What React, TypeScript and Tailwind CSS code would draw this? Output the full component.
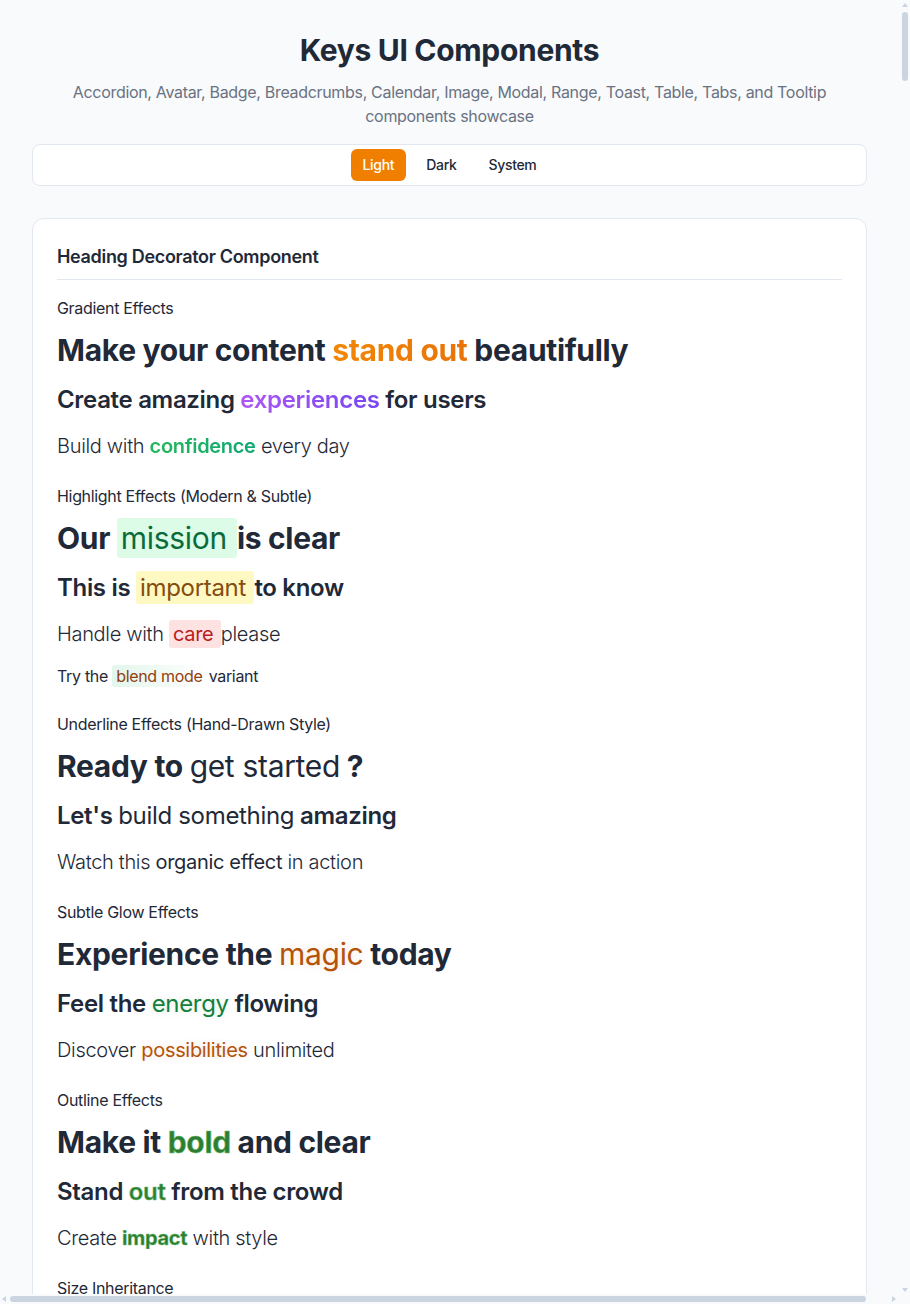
import React from "react";

type Mode = "Light" | "Dark" | "System";

const modes: Mode[] = ["Light", "Dark", "System"];

function SectionLabel({ children, className = "" }: { children: React.ReactNode; className?: string }) {
  return <h4 className={`text-base font-normal text-[#1f2937] ${className}`}>{children}</h4>;
}

function H1({ children }: { children: React.ReactNode }) {
  return <h1 className="mt-3 text-3xl font-bold text-[#1f2937]">{children}</h1>;
}

function H2({ children }: { children: React.ReactNode }) {
  return <h2 className="mt-4 text-2xl font-semibold text-[#1f2937]">{children}</h2>;
}

function P({ children }: { children: React.ReactNode }) {
  return <p className="mt-4 text-xl font-light text-[#1f2937]">{children}</p>;
}

function Arrow({ dir }: { dir: "up" | "down" | "left" | "right" }) {
  const points = {
    up: "0,4 3,0 6,4",
    down: "0,0 6,0 3,4",
    left: "4,0 4,6 0,3",
    right: "0,0 0,6 4,3",
  }[dir];
  const vertical = dir === "up" || dir === "down";
  return (
    <svg width={vertical ? 6 : 4} height={vertical ? 4 : 6} viewBox={vertical ? "0 0 6 4" : "0 0 4 6"}>
      <polygon points={points} fill="#cbd5e1" />
    </svg>
  );
}

export default function App() {
  const mode: Mode = "Light";

  return (
    <div className="flex h-screen flex-col bg-[#f8fafc] font-[Inter,sans-serif] tracking-[-0.02em]">
      <div className="flex min-h-0 flex-1">
        <main className="min-w-0 flex-1 overflow-auto px-8 pt-8 pb-16 [scrollbar-width:none]">
          <header className="text-center">
            <h1 className="text-3xl font-bold text-[#1f2937]">Keys UI Components</h1>
            <p className="mx-auto mt-3 max-w-3xl text-base text-gray-500">
              Accordion, Avatar, Badge, Breadcrumbs, Calendar, Image, Modal, Range, Toast, Table, Tabs, and Tooltip
              components showcase
            </p>
          </header>

          <div className="mt-4 flex justify-center gap-2 rounded-lg border border-slate-200 bg-white p-1">
            {modes.map((m) => (
              <button
                key={m}
                className={
                  m === mode
                    ? "h-8 rounded-md bg-[#f07f00] px-3 text-sm font-medium text-white"
                    : "h-8 rounded-md px-3 text-sm font-medium text-[#1f2937]"
                }
                type="button"
              >
                {m}
              </button>
            ))}
          </div>

          <section className="mt-8 rounded-xl border border-slate-200 bg-white p-6">
            <h3 className="border-b border-slate-200 pb-2 text-lg font-semibold text-[#1f2937]">
              Heading Decorator Component
            </h3>

            <SectionLabel className="mt-4">Gradient Effects</SectionLabel>
            <H1>
              Make your content{" "}
              <span className="bg-linear-to-r from-[#f28705] to-[#e8730a] bg-clip-text text-transparent">stand out</span>{" "}
              beautifully
            </H1>
            <H2>
              Create amazing{" "}
              <span className="bg-linear-to-r from-[#ae56f5] to-[#7747f0] bg-clip-text text-transparent">experiences</span>{" "}
              for users
            </H2>
            <P>
              Build with{" "}
              <span className="bg-linear-to-r from-[#22b85a] to-[#0fa773] bg-clip-text font-semibold text-transparent">
                confidence
              </span>{" "}
              every day
            </P>

            <SectionLabel className="mt-6">Highlight Effects (Modern &amp; Subtle)</SectionLabel>
            <H1>
              Our{" "}
              <span className="rounded-[3px] bg-[#dcfce7] py-0.5 pr-0.5 pl-1 font-normal text-[#0b6b3c]">mission </span>
              is clear
            </H1>
            <H2>
              This is{" "}
              <span className="rounded-[3px] bg-[#fef9c3] py-0.5 pr-0.5 pl-1 font-normal text-[#854d0e]">important </span>
              to know
            </H2>
            <P>
              Handle with{" "}
              <span className="rounded-[3px] bg-[#fee2e2] py-0.5 pr-0.5 pl-1 font-normal text-[#b91c1c]">care </span>
              please
            </P>
            <p className="mt-4 text-base text-[#1f2937]">
              Try the{" "}
              <span className="rounded-[3px] bg-linear-to-r from-[#e3f6ec] to-transparent py-px pr-0.5 pl-1 text-[#92400e]">
                blend mode{" "}
              </span>{" "}
              variant
            </p>

            <SectionLabel className="mt-6">Underline Effects (Hand-Drawn Style)</SectionLabel>
            <H1>
              Ready to <span className="font-normal">get started</span> ?
            </H1>
            <H2>
              Let&apos;s <span className="font-normal">build something</span> amazing
            </H2>
            <P>
              Watch this <span className="font-normal">organic effect</span> in action
            </P>

            <SectionLabel className="mt-6">Subtle Glow Effects</SectionLabel>
            <H1>
              Experience the{" "}
              <span className="font-normal text-[#b45309] [text-shadow:0_0_8px_rgba(180,83,9,0.15)]">magic</span> today
            </H1>
            <H2>
              Feel the{" "}
              <span className="font-normal text-[#15803d] [text-shadow:0_0_8px_rgba(21,128,61,0.15)]">energy</span> flowing
            </H2>
            <P>
              Discover{" "}
              <span className="font-normal text-[#b45309] [text-shadow:0_0_8px_rgba(180,83,9,0.15)]">possibilities</span>{" "}
              unlimited
            </P>

            <SectionLabel className="mt-6">Outline Effects</SectionLabel>
            <H1>
              Make it <span className="text-[#2e7d32] [-webkit-text-stroke:0.6px_#6cc070]">bold</span> and clear
            </H1>
            <H2>
              Stand <span className="text-[#2e7d32] [-webkit-text-stroke:0.5px_#6cc070]">out</span> from the crowd
            </H2>
            <P>
              Create{" "}
              <span className="font-bold text-[#2e7d32] [-webkit-text-stroke:0.4px_#6cc070]">impact</span> with style
            </P>

            <SectionLabel className="mt-6">Size Inheritance</SectionLabel>
            <H1>
              Heading with{" "}
              <span className="bg-linear-to-r from-[#f28705] to-[#e8730a] bg-clip-text text-transparent">inherited</span>{" "}
              size
            </H1>
            <H2>
              Subheading with{" "}
              <span className="rounded-[3px] bg-[#dcfce7] py-0.5 pr-0.5 pl-1 font-normal text-[#0b6b3c]">matching </span>
              scale
            </H2>
          </section>
        </main>

        {/* vertical scrollbar */}
        <div className="flex w-[11px] flex-col items-center pt-[3px] pb-[2px]">
          <Arrow dir="up" />
          <div className="mt-[5px] h-[69px] w-[6px] rounded-full bg-[#cbd5e1]" />
          <div className="flex-1" />
          <Arrow dir="down" />
        </div>
      </div>

      {/* horizontal scrollbar */}
      <div className="flex h-[10px] items-center">
        <div className="flex flex-1 items-center pl-[2px] pr-[3px]">
          <Arrow dir="left" />
          <div className="ml-[4px] h-[6px] w-[856px] rounded-full bg-[#cbd5e1]" />
          <div className="flex-1" />
          <Arrow dir="right" />
        </div>
        <div className="w-[11px]" />
      </div>
    </div>
  );
}
